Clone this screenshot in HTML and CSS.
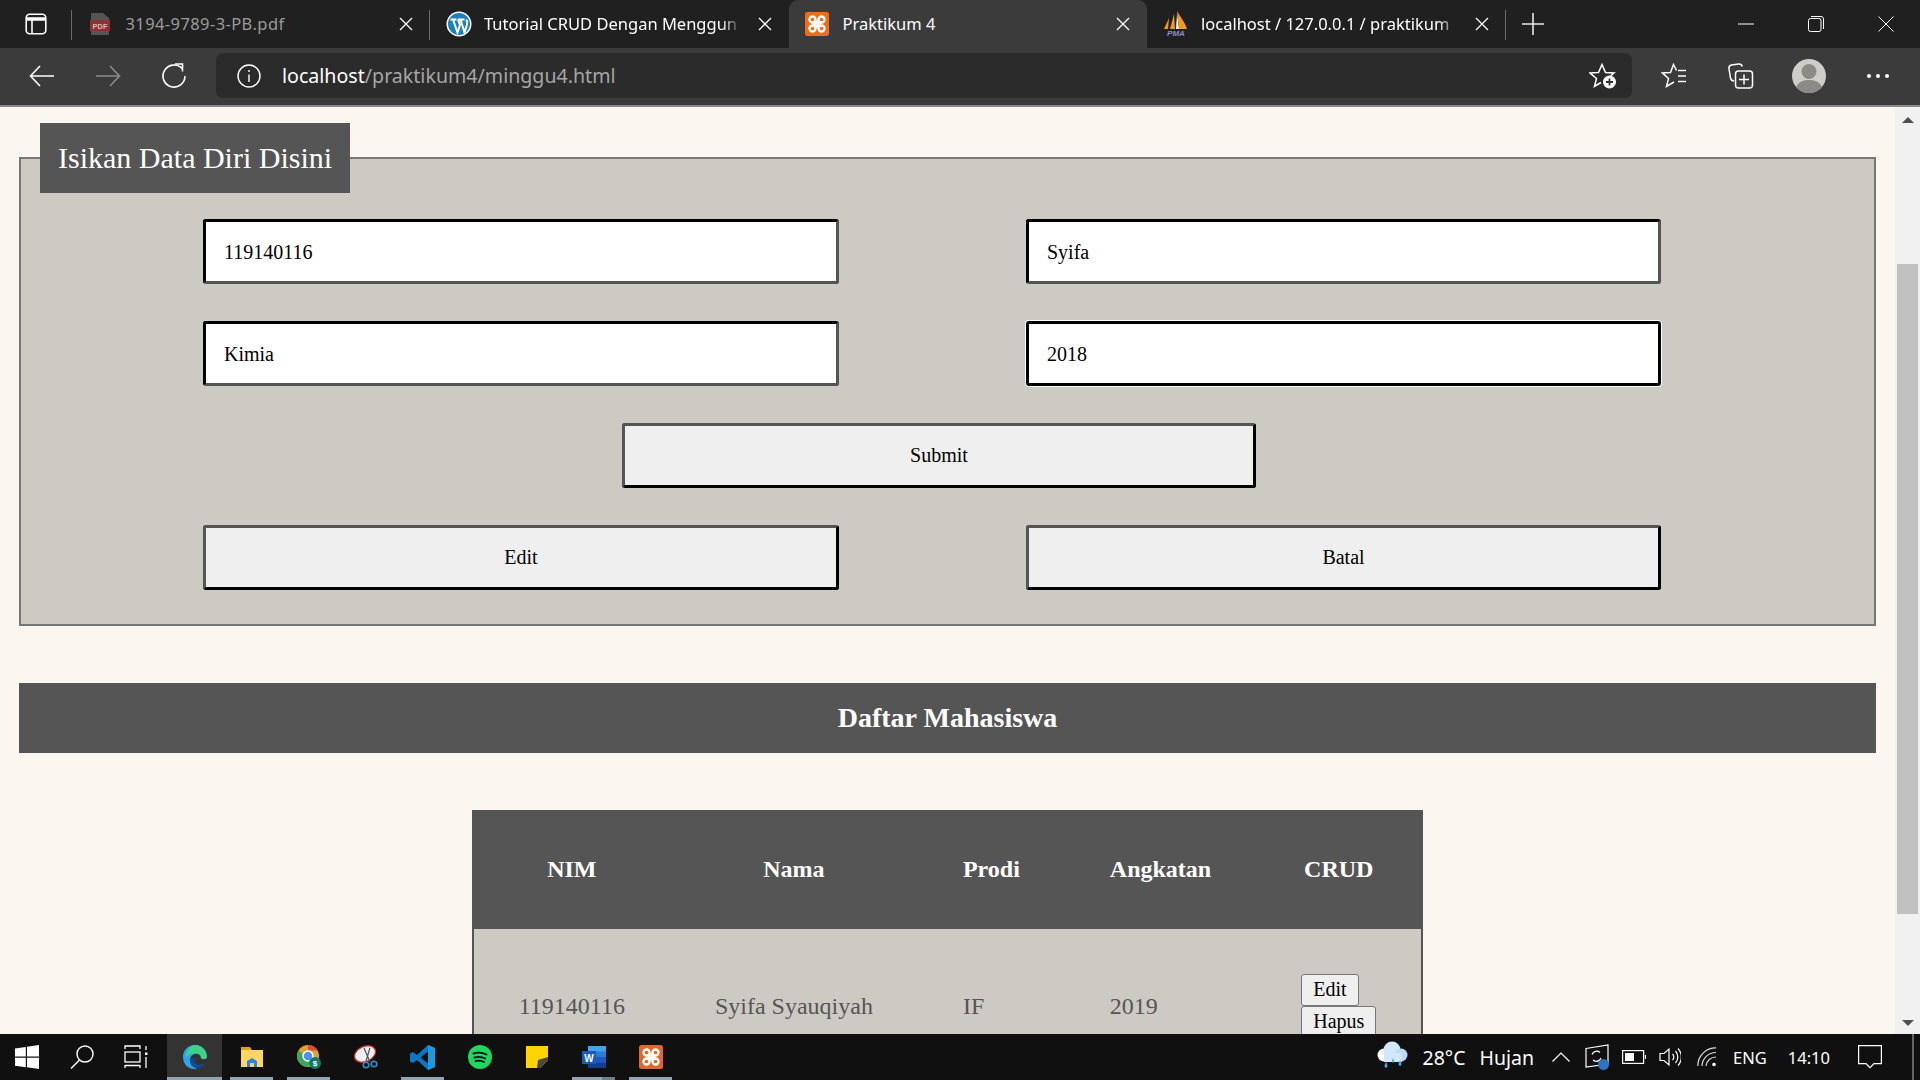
FILE: index.html
```html
<!DOCTYPE html>
<html lang="id">
<head>
<meta charset="utf-8">
<title>Praktikum 4</title>
<link rel="stylesheet" href="styles.css">
</head>
<body>
<div class="screen">
  <header class="tabstrip">
    <div class="sidebar-btn">
      <svg width="22" height="22" viewBox="0 0 22 22" fill="none" stroke="#fff" stroke-width="1.600"><rect x="1.200" y="1.200" width="19.600" height="19.600" rx="3.500"/><path d="M1.200 6h19.600" stroke-width="3.500"/><path d="M7 6v14.800"/></svg>
    </div>
    <div class="tab tab-sep">
      <svg class="fav" width="24" height="24" viewBox="0 0 24 24"><path d="M3 1h12l6 5v17H3z" fill="#555"/><rect x="2" y="8" width="20" height="11" fill="#8f3133"/><text x="12" y="16.500" class="pdf-mark">PDF</text></svg>
      <span class="tab-title dim">3194-9789-3-PB.pdf</span>
      <svg class="x" width="14" height="14" viewBox="0 0 14 14"><path d="M1 1l12 12M13 1L1 13"/></svg>
    </div>
    <div class="tab tight">
      <svg class="fav" width="26" height="26" viewBox="0 0 26 26"><circle cx="13" cy="13" r="12.500" fill="#fff"/><circle cx="13" cy="13" r="11" fill="#1f7fb8"/><path d="M4.500 8.500h6M12 8.500h6.500M7 8.500l4.500 13L14 14l-2-5.500M14.500 8.500l4 13 2.500-8c.6-2 .2-3.500-.7-5" fill="none" stroke="#fff" stroke-width="2"/></svg>
      <span class="tab-title fade">Tutorial CRUD Dengan Menggun</span>
      <svg class="x" width="14" height="14" viewBox="0 0 14 14"><path d="M1 1l12 12M13 1L1 13"/></svg>
    </div>
    <div class="tab active">
      <svg class="fav" width="24" height="24" viewBox="0 0 24 24"><rect width="24" height="24" rx="2.500" fill="#ef6c1b"/><g fill="none" stroke="#fff" stroke-width="2.300"><circle cx="7.500" cy="7.500" r="3"/><circle cx="16.500" cy="7.500" r="3"/><circle cx="7.500" cy="16.500" r="3"/><circle cx="16.500" cy="16.500" r="3"/><path d="M10.500 7.500v9M13.500 7.500v9M7.500 10.500h9M7.500 13.500h9"/></g></svg>
      <span class="tab-title">Praktikum 4</span>
      <svg class="x" width="14" height="14" viewBox="0 0 14 14"><path d="M1 1l12 12M13 1L1 13"/></svg>
    </div>
    <div class="tab tab-sep tight">
      <svg class="fav" width="26" height="26" viewBox="0 0 26 26"><path d="M14 0l8 13 2 5H16zM11 3l1 15H7zM6 7l-1 11H1z" fill="#f39a1e"/><path d="M14 3l-1 15h3z" fill="#fff"/><text x="13" y="25" class="pma-mark">PMA</text></svg>
      <span class="tab-title fade">localhost / 127.0.0.1 / praktikum</span>
      <svg class="x" width="14" height="14" viewBox="0 0 14 14"><path d="M1 1l12 12M13 1L1 13"/></svg>
    </div>
    <div class="newtab"><svg width="22" height="22" viewBox="0 0 22 22"><path d="M11 0v22M0 11h22" stroke="#e6e6e6" stroke-width="1.600"/></svg></div>
    <div class="winctl">
      <svg width="16" height="16" viewBox="0 0 16 16"><path d="M0 8h16" stroke="#fff"/></svg>
      <svg width="16" height="16" viewBox="0 0 16 16" fill="none" stroke="#fff"><rect x=".5" y="2.500" width="12.500" height="13" rx="2"/><path d="M3 .5h10a2.500 2.500 0 0 1 2.500 2.500v10"/></svg>
      <svg width="16" height="16" viewBox="0 0 16 16"><path d="M.5.5l15 15M15.500.5l-15 15" stroke="#fff"/></svg>
    </div>
  </header>

  <nav class="toolbar">
    <svg class="tb-back" width="26" height="22" viewBox="0 0 26 22" fill="none" stroke="#fff" stroke-width="1.600"><path d="M25 11H2M11 1L1.500 11 11 21"/></svg>
    <svg class="tb-fwd" width="26" height="22" viewBox="0 0 26 22" fill="none" stroke="#8a8a8a" stroke-width="1.600"><path d="M1 11h23M15 1l9.500 10L15 21"/></svg>
    <svg class="tb-reload" width="26" height="26" viewBox="0 0 26 26" fill="none" stroke="#fff" stroke-width="1.600"><path d="M21 5.500A11 11 0 1 0 24 13"/><path d="M14 1h7.500v7.500"/></svg>
    <div class="addressbar">
      <svg class="info" width="24" height="24" viewBox="0 0 24 24" fill="none" stroke="#fff" stroke-width="1.400"><circle cx="12" cy="12" r="11"/><path d="M12 10.500V18M12 6v2"/></svg>
      <span class="url"><b>localhost</b>/praktikum4/minggu4.html</span>
      <svg class="addfav" width="28" height="26" viewBox="0 0 28 26" fill="none" stroke="#fff" stroke-width="1.500"><path d="M21.500 13L25 10l-8.500-.5L13 1.500 9.500 9.500 1 10l6.500 5.500-2 8 6.500-4"/><circle cx="20.500" cy="19" r="6.500" fill="#fff" stroke="none"/><path d="M20.500 15.500v7M17 19h7" stroke="#333" stroke-width="1.800"/></svg>
    </div>
    <svg class="tb-favs" width="26" height="26" viewBox="0 0 26 26" fill="none" stroke="#fff" stroke-width="1.500"><path d="M15.500 7.500L12.500 1.500 9.500 9.500 1.500 10l6 5.500-2 8 7.500-4.500"/><path d="M17 7.500h8M17 13h8M17 18.500h8"/></svg>
    <svg class="tb-coll" width="26" height="26" viewBox="0 0 26 26" fill="none" stroke="#fff" stroke-width="1.500"><path d="M6 18c-2.500 0-3-1-3.500-3L1 6c-.4-2.500.5-3.600 2.500-4l7-1c2-.2 3.300.5 3.800 2.500"/><rect x="7.500" y="8" width="17" height="17" rx="3"/><path d="M16 11.500v10M11 16.500h10"/></svg>
    <div class="avatar"><svg width="34" height="34" viewBox="0 0 34 34"><circle cx="17" cy="17" r="17" fill="#cfcdc9"/><circle cx="17" cy="12.500" r="7.500" fill="#8c8a86"/><path d="M4 28c3-6 8-7 13-7s10 1 13 7a17 17 0 0 1-26 0z" fill="#8c8a86"/></svg></div>
    <div class="dots"><i></i><i></i><i></i></div>
  </nav>

  <div class="viewport">
    <main class="page">
      <form class="panel">
        <fieldset class="box">
          <legend class="box-title">Isikan Data Diri Disini</legend>
          <div class="grid">
            <input class="field" type="text" value="119140116">
            <input class="field" type="text" value="Syifa">
            <input class="field" type="text" value="Kimia">
            <input class="field focus" type="text" value="2018">
            <button class="btn wide" type="button">Submit</button>
            <button class="btn" type="button">Edit</button>
            <button class="btn" type="button">Batal</button>
          </div>
        </fieldset>
      </form>
      <h2 class="bar">Daftar Mahasiswa</h2>
      <table class="data">
        <thead>
          <tr><th>NIM</th><th>Nama</th><th>Prodi</th><th>Angkatan</th><th>CRUD</th></tr>
        </thead>
        <tbody>
          <tr>
            <td>119140116</td><td>Syifa Syauqiyah</td><td>IF</td><td>2019</td>
            <td><button class="mini" type="button">Edit</button><button class="mini" type="button">Hapus</button></td>
          </tr>
        </tbody>
      </table>
    </main>
    <aside class="scrollbar">
      <span class="arrow up"></span>
      <span class="thumb"></span>
      <span class="arrow down"></span>
    </aside>
  </div>

  <footer class="taskbar">
    <div class="task-left">
      <svg class="t-start" width="24" height="24" viewBox="0 0 24 24" fill="#fff"><path d="M0 3.400l10.800-1.500V11.500H0zM12 1.700L24 0v11.500H12zM0 12.700h10.800v9.500L0 20.700zM12 12.700h12V24l-12-1.700z"/></svg>
      <svg class="t-search" width="24" height="24" viewBox="0 0 24 24" fill="none" stroke="#fff" stroke-width="1.400"><circle cx="15" cy="9" r="8"/><path d="M9.500 15L1 23.500"/></svg>
      <svg class="t-view" width="24" height="24" viewBox="0 0 24 24" fill="none" stroke="#fff" stroke-width="1.300"><path d="M1 4V1h15v3M1 20v3M16 20v3M1 20.500h15"/><rect x="1" y="7" width="15" height="10"/><path d="M22 1v4M22 12v11"/><rect x="21" y="7.500" width="2.500" height="2.500" fill="#fff" stroke="none"/></svg>
      <div class="app on edge">
        <svg width="24" height="24" viewBox="0 0 24 24"><path d="M12 0C5 0 0 5 0 12c0 7 5 12 11 12 1 0 2 0 3-.5-4-1-7-4-7-8 0-4 3-7 7-7 4 0 6 2 7 4 1 1 2 1 2.500 0 .5-6-4.500-12.500-11.500-12.500z" fill="#2aa6e8"/><path d="M12 0c7 0 12 5 12 12 0 2-3 3-6 1.500 0-3-2-5-6-5S4 10 2.500 13C3 6 7 0 12 0z" fill="#3fd18a"/><path d="M7 15c0 4 3 7.500 7 8.500 3-.5 6-2 8-5-4 1.500-8 1.500-10-1-1-1.500 1-4 3-4-4-1-8 0-8 1.500z" fill="#0d4a8f"/></svg>
      </div>
      <div class="app on">
        <svg width="22" height="24" viewBox="0 0 22 24"><path d="M0 2h9l2 3H0z" fill="#e2a21c"/><rect y="5" width="22" height="17" fill="#ffd666"/><path d="M6 22v-6l5-3 5 3v6h-3v-4H9v4z" fill="#2b86d9"/></svg>
      </div>
      <div class="app on">
        <svg width="24" height="24" viewBox="0 0 24 24"><circle cx="11" cy="11" r="11" fill="#d9a62e"/><path d="M11 0a11 11 0 0 1 9.500 5.500H11z" fill="#dd4b3e"/><path d="M1.500 5.500A11 11 0 0 0 11 22l3-6z" fill="#3ca55c"/><circle cx="11" cy="11" r="5" fill="#4f8ff0" stroke="#fff" stroke-width="1.500"/><circle cx="18" cy="18" r="6" fill="#0e7c6b"/><text x="18" y="21" class="coin-mark">$</text></svg>
      </div>
      <div class="app">
        <svg width="24" height="24" viewBox="0 0 24 24" fill="none"><ellipse cx="11" cy="9" rx="11" ry="7.500" transform="rotate(-25 11 9)" fill="#f1f1f1" stroke="#c8312b" stroke-width="1.300"/><path d="M10 3l6 14M16 3L12 16" stroke="#555" stroke-width="1.200"/><circle cx="12" cy="20" r="2.800" stroke="#2b8fd0" stroke-width="1.600"/><circle cx="20" cy="19" r="2.800" stroke="#2b8fd0" stroke-width="1.600"/></svg>
      </div>
      <div class="app on">
        <svg width="25" height="25" viewBox="0 0 25 25"><path d="M18 0l7 3v19l-7 3L7 15l-4 3-3-1.500v-8L3 7l4 3z" fill="#0a78c2"/><path d="M18 0l7 3v19l-7 3z" fill="#1c9ae0"/><path d="M18 6.500L10.500 12.500 18 18.500z" fill="#101010"/></svg>
      </div>
      <div class="app">
        <svg width="24" height="24" viewBox="0 0 24 24" fill="none"><circle cx="12" cy="12" r="12" fill="#1ed760"/><path d="M5.500 8.500c4-1.200 9-1 13 1M6.500 12.500c3.500-1 7.500-.7 10.700 1M7.500 16c3-.7 6-.5 8.500 1" stroke="#101010" stroke-width="1.900" stroke-linecap="round"/></svg>
      </div>
      <div class="app">
        <svg width="22" height="22" viewBox="0 0 22 22"><path d="M0 0h22v14l-8 8H0z" fill="#ffd400"/><path d="M22 11v3l-8 8h-3l1-8z" fill="#4a4a3a"/></svg>
      </div>
      <div class="app on split">
        <svg width="24" height="24" viewBox="0 0 24 24"><rect x="6" y="1" width="18" height="22" fill="#2b7cd3"/><rect x="6" y="1" width="18" height="5.500" fill="#41a5ee"/><rect x="6" y="12" width="18" height="5.500" fill="#185abd"/><rect x="6" y="17.500" width="18" height="5.500" fill="#103f91"/><rect y="6" width="14" height="13" fill="#185abd"/><text x="7" y="16.500" class="word-mark">W</text></svg>
      </div>
      <div class="app on">
        <svg width="24" height="24" viewBox="0 0 24 24"><rect width="24" height="24" rx="2.500" fill="#e0682a"/><g fill="none" stroke="#fff" stroke-width="2.300"><circle cx="7.500" cy="7.500" r="3"/><circle cx="16.500" cy="7.500" r="3"/><circle cx="7.500" cy="16.500" r="3"/><circle cx="16.500" cy="16.500" r="3"/><path d="M10.500 7.500v9M13.500 7.500v9M7.500 10.500h9M7.500 13.500h9"/></g></svg>
      </div>
    </div>
    <div class="tray">
      <svg class="tr-cloud" width="32" height="32" viewBox="0 0 32 32"><circle cx="8" cy="14" r="6.500" fill="#fff"/><circle cx="16" cy="9" r="8.500" fill="#cfe8fb"/><circle cx="25" cy="14" r="6.500" fill="#bcdcf5"/><rect x="8" y="12" width="18" height="9" fill="#cfe8fb"/><path d="M10 21q-3 5 0 6 3-1 0-6zM17 17q-2 4 0 5 2-1 0-5zM24 19q-3 5 0 6 3-1 0-6z" fill="#4da3e8"/></svg>
      <span class="tr-weather temp">28°C</span>
      <span class="tr-weather">Hujan</span>
      <svg class="tr-up" width="18" height="10" viewBox="0 0 18 10" fill="none" stroke="#fff" stroke-width="1.200"><path d="M.5 9.500L9 1l8.500 8.500"/></svg>
      <svg class="tr-sync" width="24" height="26" viewBox="0 0 24 26" fill="none" stroke="#fff" stroke-width="1.200"><path d="M1 4.500L23 1v19L1 23z"/><path d="M7 10.500a5 5 0 0 1 8-2M16 14a5 5 0 0 1-8 2"/><circle cx="18.500" cy="20.500" r="5.500" fill="#2f74c0" stroke="none"/></svg>
      <svg class="tr-batt" width="24" height="14" viewBox="0 0 24 14" fill="none" stroke="#fff" stroke-width="1.200"><rect x=".6" y=".6" width="21" height="12.800"/><rect x="3" y="3" width="9" height="8" fill="#fff" stroke="none"/><path d="M23.500 5v4"/></svg>
      <svg class="tr-vol" width="22" height="22" viewBox="0 0 22 22" fill="none" stroke="#fff" stroke-width="1.200"><path d="M1 7.500h4L10 3v16l-5-4.500H1zM13.500 8a4 4 0 0 1 0 6M16.500 5a9 9 0 0 1 0 12M19 2.500a12.500 12.500 0 0 1 0 17"/></svg>
      <svg class="tr-wifi" width="20" height="20" viewBox="0 0 20 20" fill="none" stroke="#ddd" stroke-width="1.200"><path d="M.8 19A18 18 0 0 1 19 .8M5 19A14 14 0 0 1 19 5.500M9 19A10 10 0 0 1 19 10"/><circle cx="17" cy="17.500" r="1.800" fill="#fff" stroke="none"/></svg>
      <span class="tr-lang">ENG</span>
      <span class="tr-clock">14:10</span>
      <svg class="tr-note" width="24" height="24" viewBox="0 0 24 24" fill="none" stroke="#fff" stroke-width="1.200"><path d="M.6.6h22.800v18H16l-4 4-4-4H.6z"/></svg>
      <span class="show-desktop"></span>
    </div>
  </footer>
</div>
</body>
</html>
```

FILE: styles.css
```css
* { box-sizing: border-box; }
html, body { margin: 0; padding: 0; height: 100%; overflow: hidden; }
body { font-family: "Liberation Serif", "Times New Roman", serif; background: #101010; }
.screen { width: 1920px; height: 1080px; display: flex; flex-direction: column; overflow: hidden; }

/* browser tab strip */
.tabstrip { height: 48px; flex: none; background: #202020; display: flex; align-items: stretch; font-family: "Noto Sans", "Open Sans", sans-serif; font-size: 16.500px; }
.sidebar-btn { width: 71.500px; flex: none; display: flex; align-items: center; padding-left: 25px; position: relative; }
.sidebar-btn::after { content: ""; position: absolute; right: 0; top: 10px; height: 30px; width: 1px; background: #6a6a6a; }
.tab { width: 358.500px; flex: none; display: flex; align-items: center; padding: 0 17px 0 16px; gap: 14px; position: relative; color: #fff; }
.tab.tight { gap: 12px; }
.tab-sep::after { content: ""; position: absolute; right: 0; top: 10px; height: 30px; width: 1px; background: #6a6a6a; }
.tab.active { background: #3b3b3b; border-radius: 9px 9px 0 0; }
.fav { flex: none; }
.tab-title { flex: 1; white-space: nowrap; overflow: hidden; min-width: 0; padding-bottom: 2px; }
.tab-title.dim { color: #9b9b9b; letter-spacing: .4px; }
.tab-title.fade { -webkit-mask-image: linear-gradient(to right, #000 92%, transparent); mask-image: linear-gradient(to right, #000 92%, transparent); }
.x { flex: none; margin-left: 4px; fill: none; stroke: #fff; stroke-width: 1.300; }
.pdf-mark { font: bold 7.500px "Liberation Sans", sans-serif; fill: #d9b3b3; text-anchor: middle; }
.pma-mark { font: italic bold 8px "Liberation Sans", sans-serif; fill: #8d8fc0; text-anchor: middle; }
.newtab { width: 54px; flex: none; display: flex; align-items: center; justify-content: center; }
.winctl { margin-left: auto; flex: none; display: flex; align-items: center; gap: 54px; padding-right: 26px; }
.winctl svg { flex: none; }

/* toolbar */
.toolbar { height: 59px; flex: none; background: #3b3b3b; border-bottom: 2px solid #8a8a8a; display: flex; align-items: center; font-family: "Noto Sans", "Open Sans", sans-serif; padding: 0 0 2px 0; }
.toolbar svg { flex: none; }
.tb-back { margin-left: 29px; }
.tb-fwd { margin-left: 40px; }
.tb-reload { margin-left: 40px; }
.addressbar { width: 1416px; height: 45px; margin-left: 29px; background: #2b2b2b; border-radius: 7px; display: flex; align-items: center; padding: 0 15px 0 21px; }
.url { margin-left: 21px; font-size: 19.600px; color: #a6a6a6; flex: 1; }
.url b { font-weight: 400; color: #fff; }
.tb-favs { margin-left: 29px; }
.tb-coll { margin-left: 41px; }
.avatar { margin-left: 38px; width: 34px; height: 34px; flex: none; }
.dots { margin-left: 41px; display: flex; gap: 5px; }
.dots i { width: 4px; height: 4px; border-radius: 50%; background: #fff; }

/* page */
.viewport { flex: 1; min-height: 0; display: flex; background: #fbf6f0; overflow: hidden; }
.page { flex: 1; min-width: 0; padding: 0 19px; overflow: hidden; }
.scrollbar { width: 25px; flex: none; background: #f1f1f1; display: flex; flex-direction: column; align-items: center; padding: 0 2px; }
.arrow { width: 0; height: 0; border-left: 6px solid transparent; border-right: 6px solid transparent; flex: none; }
.arrow.up { border-bottom: 6px solid #505050; margin-top: 10px; }
.arrow.down { border-top: 6px solid #505050; margin-top: 106px; }
.thumb { display: block; width: 100%; height: 650px; background: #c1c1c1; margin-top: 141px; flex: none; }

.panel { margin: 0; padding-top: 16px; }
.box { margin: 0; padding: 0 0 34px; border: 2px solid #777; background: #cdcac3; min-width: 0; }
.box-title { margin-left: 19px; padding: 0 18px; height: 70px; line-height: 69px; background: #555; color: #fff; font-size: 30px; }
.grid { width: 1458px; margin: 26px 0 0 182px; display: grid; grid-template-columns: 636px 635px; justify-content: space-between; row-gap: 37px; }
.field, .btn { height: 65px; font: 20px "Liberation Serif", "Times New Roman", serif; color: #000; border-radius: 3px; border-width: 3px; border-style: solid; }
.field { background: #fff; padding: 1px 18px 0; border-color: #000 #555 #555 #000; outline: none; }
.field.focus { border-color: #000; box-shadow: 0 0 0 1px #fff; }
.btn { background: #efefef; border-color: #555 #000 #000 #555; }
.btn.wide { grid-column: 1 / -1; width: 634px; justify-self: center; margin-left: 14px; }

.bar { margin: 57px 0 0; height: 70px; line-height: 70px; background: #555; color: #fff; text-align: center; font-size: 28px; font-weight: 700; }

.data { margin: 57px auto 0; border-collapse: collapse; font-size: 24px; color: #555; }
.data th { background: #555; color: #fff; padding: 46px 45px; font-weight: 700; }
.data thead tr { border-left: 2px solid #555; border-right: 2px solid #555; }
.data tbody tr { background: #cdcac3; border-left: 2px solid #555; border-right: 2px solid #555; }
.data td { padding: 45px 45px 39px; text-align: left; }
.mini { display: block; font: 20px "Liberation Serif", "Times New Roman", serif; color: #000; background: #efefef; border: 1px solid #767676; border-radius: 3px; padding: 0 11px 2px; height: 32px; }

/* taskbar */
.taskbar { height: 46px; flex: none; background: #101010; display: flex; justify-content: space-between; }
.task-left { display: flex; align-items: center; }
.t-start { margin-left: 15px; }
.t-search { margin-left: 31px; }
.t-view { margin-left: 30px; margin-right: 18px; }
.app { width: 57px; height: 46px; display: flex; align-items: center; justify-content: center; position: relative; flex: none; }
.app.edge { background: #333; background-clip: content-box; padding: 0 1px; }
.app.on::after { content: ""; position: absolute; left: 7px; right: 7px; bottom: 0; height: 3px; background: #93a3b1; }
.app.edge::after { left: 1px; right: 1px; }
.app.split::before { content: ""; position: absolute; right: 7px; bottom: 0; width: 13px; height: 3px; background: #6f7f88; z-index: 1; }
.coin-mark { font: bold 8px "Liberation Sans", sans-serif; fill: #fff; text-anchor: middle; }
.word-mark { font: bold 10px "Liberation Sans", sans-serif; fill: #fff; text-anchor: middle; }
.tray { display: flex; align-items: center; color: #fff; font-family: "Noto Sans", "Open Sans", sans-serif; padding-right: 6px; }
.tray svg { flex: none; }
.tr-weather { font-size: 19.500px; margin-left: 14px; }
.tr-weather.temp { margin-left: 15px; }
.tr-up { margin-left: 18px; }
.tr-sync { margin-left: 15px; }
.tr-batt { margin-left: 13px; }
.tr-vol { margin-left: 13px; }
.tr-wifi { margin-left: 16px; }
.tr-lang { font-size: 16.500px; margin-left: 16px; }
.tr-clock { font-size: 16.500px; margin-left: 21px; }
.tr-note { margin-left: 28px; }
.show-desktop { width: 2px; height: 46px; background: #666; margin-left: 30px; flex: none; }
```
